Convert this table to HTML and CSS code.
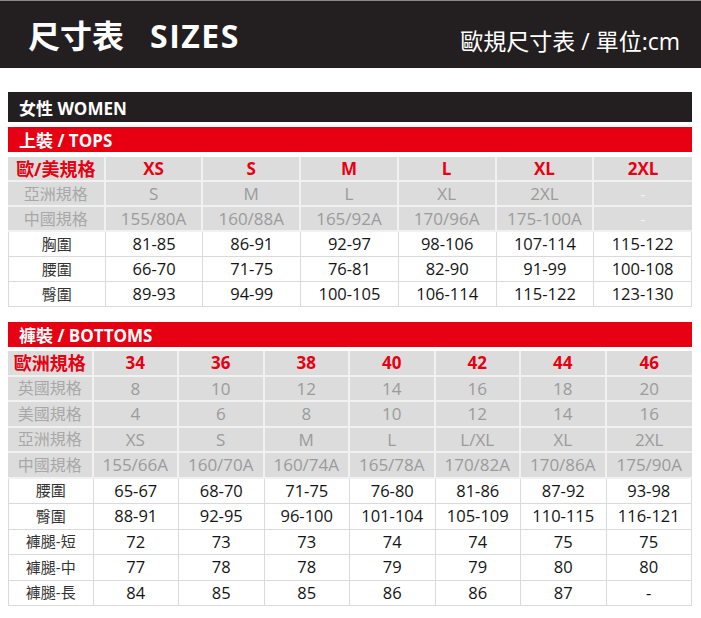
FILE: index.html
```html
<!DOCTYPE html>
<html lang="zh-Hant">
<head>
<meta charset="utf-8">
<title>尺寸表 SIZES</title>
<link rel="stylesheet" href="styles.css">
</head>
<body>
<div class="page">
  <header class="topbar">
    <h1 class="title"><span class="title-zh">尺寸表</span><span class="title-en">SIZES</span></h1>
    <div class="unit">歐規尺寸表 / 單位:cm</div>
  </header>

  <main class="content">
    <div class="bar bar-dark">女性 WOMEN</div>
    <div class="bar bar-red">上裝 / TOPS</div>
    <table class="size-table tops">
      <tr class="row-head">
        <td class="lbl">歐/美規格</td><td>XS</td><td>S</td><td>M</td><td>L</td><td>XL</td><td>2XL</td>
      </tr>
      <tr class="row-gray">
        <td class="lbl">亞洲規格</td><td>S</td><td>M</td><td>L</td><td>XL</td><td>2XL</td><td class="dash-light">-</td>
      </tr>
      <tr class="row-gray">
        <td class="lbl">中國規格</td><td>155/80A</td><td>160/88A</td><td>165/92A</td><td>170/96A</td><td>175-100A</td><td class="dash-light">-</td>
      </tr>
      <tr class="row-white">
        <td class="lbl">胸圍</td><td>81-85</td><td>86-91</td><td>92-97</td><td>98-106</td><td>107-114</td><td>115-122</td>
      </tr>
      <tr class="row-white">
        <td class="lbl">腰圍</td><td>66-70</td><td>71-75</td><td>76-81</td><td>82-90</td><td>91-99</td><td>100-108</td>
      </tr>
      <tr class="row-white">
        <td class="lbl">臀圍</td><td>89-93</td><td>94-99</td><td>100-105</td><td>106-114</td><td>115-122</td><td>123-130</td>
      </tr>
    </table>

    <div class="bar bar-red bar-gap">褲裝 / BOTTOMS</div>
    <table class="size-table bottoms">
      <tr class="row-head">
        <td class="lbl">歐洲規格</td><td>34</td><td>36</td><td>38</td><td>40</td><td>42</td><td>44</td><td>46</td>
      </tr>
      <tr class="row-gray">
        <td class="lbl">英國規格</td><td>8</td><td>10</td><td>12</td><td>14</td><td>16</td><td>18</td><td>20</td>
      </tr>
      <tr class="row-gray">
        <td class="lbl">美國規格</td><td>4</td><td>6</td><td>8</td><td>10</td><td>12</td><td>14</td><td>16</td>
      </tr>
      <tr class="row-gray">
        <td class="lbl">亞洲規格</td><td>XS</td><td>S</td><td>M</td><td>L</td><td>L/XL</td><td>XL</td><td>2XL</td>
      </tr>
      <tr class="row-gray">
        <td class="lbl">中國規格</td><td>155/66A</td><td>160/70A</td><td>160/74A</td><td>165/78A</td><td>170/82A</td><td>170/86A</td><td>175/90A</td>
      </tr>
      <tr class="row-white">
        <td class="lbl">腰圍</td><td>65-67</td><td>68-70</td><td>71-75</td><td>76-80</td><td>81-86</td><td>87-92</td><td>93-98</td>
      </tr>
      <tr class="row-white">
        <td class="lbl">臀圍</td><td>88-91</td><td>92-95</td><td>96-100</td><td>101-104</td><td>105-109</td><td>110-115</td><td>116-121</td>
      </tr>
      <tr class="row-white">
        <td class="lbl">褲腿-短</td><td>72</td><td>73</td><td>73</td><td>74</td><td>74</td><td>75</td><td>75</td>
      </tr>
      <tr class="row-white">
        <td class="lbl">褲腿-中</td><td>77</td><td>78</td><td>78</td><td>79</td><td>79</td><td>80</td><td>80</td>
      </tr>
      <tr class="row-white">
        <td class="lbl">褲腿-長</td><td>84</td><td>85</td><td>85</td><td>86</td><td>86</td><td>87</td><td>-</td>
      </tr>
    </table>
  </main>
</div>
</body>
</html>
```

FILE: styles.css
```css
* { box-sizing: border-box; }

html, body {
  margin: 0;
  padding: 0;
  background: #ffffff;
}

body {
  font-family: "Open Sans", "Noto Sans CJK TC", sans-serif;
  color: #1a1a1a;
}

.page {
  width: 701px;
}

/* top header */
.topbar {
  height: 68px;
  background: #231f20;
  border-top: 1px solid #8a8888;
  display: flex;
  align-items: center;
  justify-content: space-between;
  padding: 0 21px 0 28px;
}

.title {
  margin: 0;
  display: flex;
  align-items: baseline;
  color: #ffffff;
  font-weight: 700;
  font-size: 32px;
  line-height: 1;
}

.title-zh {
  font-family: "Noto Sans CJK TC", sans-serif;
  font-weight: 700;
}

.title-en {
  margin-left: 26px;
  letter-spacing: 1.5px;
}

.unit {
  color: #ffffff;
  font-size: 23px;
  line-height: 1;
  padding-top: 14px;
}

/* content */
.content {
  padding: 24px 9px 0 8px;
  display: flex;
  flex-direction: column;
}

.bar {
  color: #ffffff;
  font-weight: 700;
  font-size: 17px;
  display: flex;
  align-items: center;
  padding-left: 11px;
}

.bar-dark {
  background: #231f20;
  height: 30px;
}

.bar-red {
  background: #e60012;
  height: 25px;
  margin-top: 5px;
  margin-bottom: 5px;
}

.bar-gap {
  margin-top: 15px;
  margin-bottom: 4px;
}

/* tables */
.size-table {
  width: 100%;
  table-layout: fixed;
  border-collapse: separate;
  border-spacing: 0;
  text-align: center;
}

.size-table td {
  padding: 0;
  white-space: nowrap;
  line-height: 1;
}

.tops tr { height: 25px; }
.bottoms tr { height: 25.5px; }

.row-head td,
.row-gray td {
  background: #dcdcdc;
  border-right: 2px solid #f1f1f1;
  border-bottom: 2px solid #f1f1f1;
}

.row-head td:last-child,
.row-gray td:last-child {
  border-right: 0;
}

.row-head td {
  color: #e60012;
  font-weight: 700;
  font-size: 17px;
}

.row-head td.lbl {
  font-size: 18px;
}

.row-gray td {
  color: #9b9b9b;
  font-size: 17px;
}

.row-gray td.lbl {
  font-size: 16px;
  color: #a8a8a8;
}

.row-gray td.dash-light {
  color: #f2f2f2;
}

.row-white td {
  background: #ffffff;
  color: #141414;
  font-size: 16.5px;
  border-right: 1px solid #dadada;
  border-bottom: 1px solid #dadada;
}

.row-white td:first-child {
  border-left: 1px solid #dadada;
}

.row-white td.lbl {
  font-size: 15px;
  color: #333333;
}
```
